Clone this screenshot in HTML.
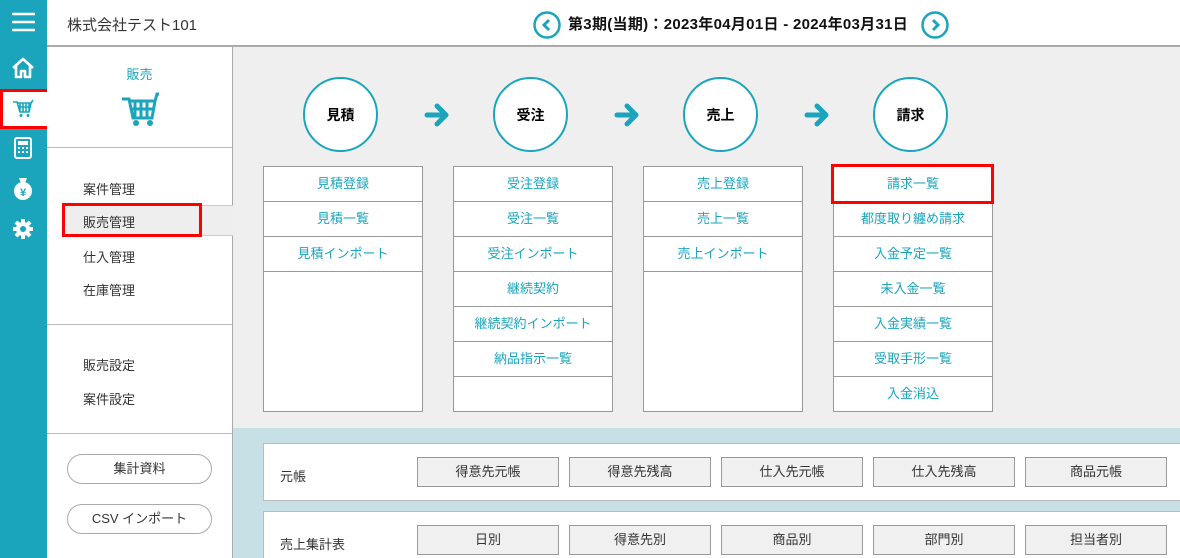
<!DOCTYPE html>
<html><head><meta charset="utf-8"><style>
*{box-sizing:border-box;margin:0;padding:0}
html{width:1180px;height:558px;overflow:hidden}
body{width:1180px;height:558px;overflow:hidden;position:relative;font-family:"Liberation Sans","Noto Sans CJK JP",sans-serif;background:#efefef;font-size:13px;color:#333}
.abs{position:absolute}
#side{left:0;top:0;width:47px;height:558px;background:#1aa5bd}
#hdr{left:47px;top:0;width:1133px;height:47px;background:#fff;border-bottom:2px solid #aaa}
#lp{left:47px;top:47px;width:186px;height:511px;background:#fff;border-right:1px solid #aaa}
.circ{width:75px;height:75px;border:2px solid #1aa5bd;border-radius:50%;background:#fff;top:77px;display:flex;align-items:center;justify-content:center;font-weight:bold;font-size:14px;color:#000}
.box{top:166px;width:160px;height:246px;background:#fff;border:1px solid #999}
.box div{height:35px;border-bottom:1px solid #999;text-align:center;line-height:34px;color:#1aa5bd;font-size:13px}
.hr{left:47px;width:185px;height:1px;background:#bbb}
.mi{left:83px;font-size:13px;color:#333}
.pb{left:67px;width:145px;height:30px;border:1px solid #aaa;border-radius:15px;text-align:center;line-height:28px;font-size:13px}
.card{left:263px;width:930px;background:#fff;border:1px solid #bbb}
.btn{top:13px;width:142px;height:30px;background:#f0f0f0;border:1px solid #999;text-align:center;line-height:28px;font-size:13px}
.arr{top:102px}
</style></head><body>
<div id="side" class="abs">
<svg class="abs" style="left:12px;top:12px" width="23" height="20"><g stroke="#fff" stroke-width="2.5"><line x1="0" y1="2" x2="23" y2="2"/><line x1="0" y1="10" x2="23" y2="10"/><line x1="0" y1="18" x2="23" y2="18"/></g></svg>
<svg class="abs" style="left:11px;top:57px" width="24" height="22"><path d="M2 11 L12 2 L22 11 M5 9 V20 H10 V14 H14 V20 H19 V9" fill="none" stroke="#fff" stroke-width="2.6" stroke-linejoin="round"/></svg>
<div class="abs" style="left:0;top:89px;width:50px;height:40px;background:#fff;border:3px solid #f00"></div>
<svg class="abs" style="left:12px;top:98px" width="22" height="20"><path d="M1 4 H5 L8 14 H17 L19 5 H6 M8 5 V14 M11 5 V14 M14 5 V14 M17 5 V14 M6 9 H19 M19 5 L21 2" fill="none" stroke="#1aa5bd" stroke-width="1.6"/><circle cx="9" cy="17.5" r="1.5" fill="#1aa5bd"/><circle cx="16" cy="17.5" r="1.5" fill="#1aa5bd"/></svg>
<svg class="abs" style="left:14px;top:137px" width="18" height="22"><rect x="1" y="1" width="16" height="20" rx="2" fill="none" stroke="#fff" stroke-width="2"/><rect x="4" y="4" width="10" height="4" fill="#fff"/><g fill="#fff"><rect x="4" y="10" width="2" height="2"/><rect x="8" y="10" width="2" height="2"/><rect x="12" y="10" width="2" height="2"/><rect x="4" y="14" width="2" height="2"/><rect x="8" y="14" width="2" height="2"/><rect x="12" y="14" width="2" height="2"/></g></svg>
<svg class="abs" style="left:12px;top:176px" width="22" height="24"><path d="M7 2 H15 L13 7 H9 Z" fill="#fff"/><circle cx="11" cy="15" r="9" fill="#fff"/><text x="11" y="20" font-size="11" font-weight="bold" text-anchor="middle" fill="#1aa5bd" font-family="Liberation Sans">¥</text></svg>
<svg class="abs" style="left:12px;top:218px" width="22" height="22" viewBox="0 0 22 22"><g fill="#fff"><circle cx="11" cy="11" r="7"/><rect x="9" y="1" width="4" height="20"/><rect x="1" y="9" width="20" height="4"/><rect x="9" y="1" width="4" height="20" transform="rotate(45 11 11)"/><rect x="9" y="1" width="4" height="20" transform="rotate(-45 11 11)"/></g><circle cx="11" cy="11" r="3" fill="#1aa5bd"/></svg>
</div>
<div id="hdr" class="abs">
<div class="abs" style="left:20px;top:14px;font-size:15px;color:#333">株式会社テスト101</div>
<svg class="abs" style="left:486px;top:11px" width="28" height="28"><circle cx="14" cy="14" r="12.5" fill="#fff" stroke="#1aa5bd" stroke-width="2.5"/><path d="M16 9 L11 14 L16 19" fill="none" stroke="#1aa5bd" stroke-width="3"/></svg>
<div class="abs" style="left:521px;top:13px;width:346px;font-size:15px;font-weight:bold;color:#111;white-space:nowrap;letter-spacing:0.3px">第3期(当期)：2023年04月01日 - 2024年03月31日</div>
<svg class="abs" style="left:874px;top:11px" width="28" height="28"><circle cx="14" cy="14" r="12.5" fill="#fff" stroke="#1aa5bd" stroke-width="2.5"/><path d="M12 9 L17 14 L12 19" fill="none" stroke="#1aa5bd" stroke-width="3"/></svg>
</div>
<div id="lp" class="abs"></div>
<div class="abs" style="left:47px;top:64px;width:185px;text-align:center;color:#1aa5bd;font-size:13px">販売</div>
<svg class="abs" style="left:121px;top:89px" width="38" height="38"><path d="M1 10 H8 L12 29 H31 L34 12 H9 M14 12 V29 M20 12 V29 M26 12 V29 M10 20 H33 M34 12 L36 5 H38" fill="none" stroke="#1aa5bd" stroke-width="3"/><circle cx="15" cy="34" r="3" fill="#1aa5bd"/><circle cx="29" cy="34" r="3" fill="#1aa5bd"/></svg>
<div class="abs hr" style="top:147px"></div>
<div class="abs mi" style="top:179px">案件管理</div>
<div class="abs" style="left:62px;top:205px;width:171px;height:31px;background:#eee;border:1px solid #ccc;border-right:none"></div>
<div class="abs" style="left:62px;top:203px;width:140px;height:34px;border:3px solid #f00"></div>
<div class="abs mi" style="top:212px">販売管理</div>
<div class="abs mi" style="top:247px">仕入管理</div>
<div class="abs mi" style="top:280px">在庫管理</div>
<div class="abs hr" style="top:324px"></div>
<div class="abs mi" style="top:355px">販売設定</div>
<div class="abs mi" style="top:389px">案件設定</div>
<div class="abs hr" style="top:433px"></div>
<div class="abs pb" style="top:454px">集計資料</div>
<div class="abs pb" style="top:504px">CSV インポート</div>

<div class="abs circ" style="left:303px">見積</div>
<div class="abs circ" style="left:493px">受注</div>
<div class="abs circ" style="left:683px">売上</div>
<div class="abs circ" style="left:873px">請求</div>
<svg class="abs arr" style="left:424px" width="28" height="26"><path d="M3 13 H22 M13 4 L22 13 L13 22" fill="none" stroke="#1aa5bd" stroke-width="5" stroke-linecap="round" stroke-linejoin="round"/></svg>
<svg class="abs arr" style="left:614px" width="28" height="26"><path d="M3 13 H22 M13 4 L22 13 L13 22" fill="none" stroke="#1aa5bd" stroke-width="5" stroke-linecap="round" stroke-linejoin="round"/></svg>
<svg class="abs arr" style="left:804px" width="28" height="26"><path d="M3 13 H22 M13 4 L22 13 L13 22" fill="none" stroke="#1aa5bd" stroke-width="5" stroke-linecap="round" stroke-linejoin="round"/></svg>

<div class="abs box" style="left:263px"><div>見積登録</div><div>見積一覧</div><div>見積インポート</div></div>
<div class="abs box" style="left:453px"><div>受注登録</div><div>受注一覧</div><div>受注インポート</div><div>継続契約</div><div>継続契約インポート</div><div>納品指示一覧</div></div>
<div class="abs box" style="left:643px"><div>売上登録</div><div>売上一覧</div><div>売上インポート</div></div>
<div class="abs box" style="left:833px"><div>請求一覧</div><div>都度取り纏め請求</div><div>入金予定一覧</div><div>未入金一覧</div><div>入金実績一覧</div><div>受取手形一覧</div><div style="border-bottom:none">入金消込</div></div>
<div class="abs" style="left:831px;top:164px;width:163px;height:40px;border:3px solid #f00"></div>

<div class="abs" style="left:233px;top:428px;width:947px;height:130px;background:#c7e0e5"></div>
<div class="abs card" style="top:443px;height:58px">
<div class="abs" style="left:16px;top:22px">元帳</div>
<div class="abs btn" style="left:153px">得意先元帳</div><div class="abs btn" style="left:305px">得意先残高</div><div class="abs btn" style="left:457px">仕入先元帳</div><div class="abs btn" style="left:609px">仕入先残高</div><div class="abs btn" style="left:761px">商品元帳</div>
</div>
<div class="abs card" style="top:511px;height:47px;border-bottom:none">
<div class="abs" style="left:16px;top:22px">売上集計表</div>
<div class="abs btn" style="left:153px">日別</div><div class="abs btn" style="left:305px">得意先別</div><div class="abs btn" style="left:457px">商品別</div><div class="abs btn" style="left:609px">部門別</div><div class="abs btn" style="left:761px">担当者別</div>
</div>
</body></html>
